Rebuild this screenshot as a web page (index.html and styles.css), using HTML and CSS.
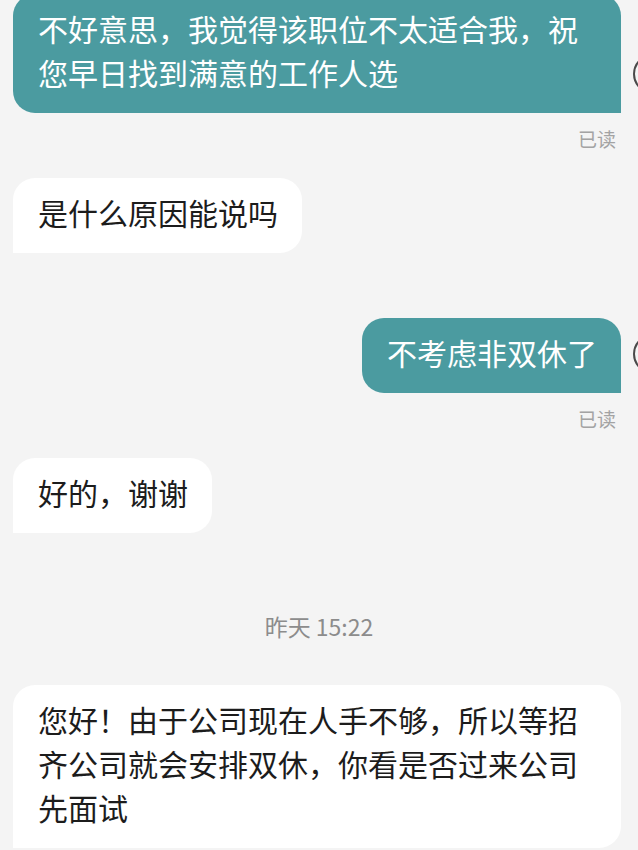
FILE: index.html
```html
<!DOCTYPE html>
<html lang="zh-CN">
<head>
<meta charset="utf-8">
<title>Chat</title>
<link rel="stylesheet" href="styles.css">
</head>
<body>
<div class="chat">
  <div class="row row-right row-first">
    <div class="bubble bubble-mine bubble-wide">不好意思，我觉得该职位不太适合我，祝您早日找到满意的工作人选</div>
    <span class="avatar"></span>
  </div>
  <div class="read">已读</div>

  <div class="row row-left gap-after-read">
    <div class="bubble bubble-theirs">是什么原因能说吗</div>
  </div>

  <div class="row row-right gap-big">
    <div class="bubble bubble-mine">不考虑非双休了</div>
    <span class="avatar"></span>
  </div>
  <div class="read">已读</div>

  <div class="row row-left gap-after-read">
    <div class="bubble bubble-theirs">好的，谢谢</div>
  </div>

  <div class="time">昨天 15:22</div>

  <div class="row row-left gap-after-time">
    <div class="bubble bubble-theirs bubble-wide">您好！由于公司现在人手不够，所以等招齐公司就会安排双休，你看是否过来公司先面试</div>
  </div>
</div>
</body>
</html>
```

FILE: styles.css
```css
html, body {
  margin: 0;
  padding: 0;
  background: #f4f4f4;
}

body {
  width: 638px;
  height: 850px;
  overflow: hidden;
  font-family: "Noto Sans CJK SC", "Noto Sans", sans-serif;
}

.chat {
  display: flex;
  flex-direction: column;
  padding: 0 17px 0 13px;
}

.row {
  position: relative;
  display: flex;
}

.row-right {
  justify-content: flex-end;
}

.row-left {
  justify-content: flex-start;
}

.row-first {
  margin-top: -6px;
}

.gap-after-read {
  margin-top: 29px;
}

.gap-big {
  margin-top: 65px;
}

.gap-after-time {
  margin-top: 46px;
}

.bubble {
  font-size: 30px;
  line-height: 44px;
  padding: 12px 24px 19px 25px;
  box-sizing: border-box;
  max-width: 608px;
}

.bubble-wide {
  width: 608px;
}

.bubble-mine {
  background: #4b9ba0;
  color: #ffffff;
  border-radius: 22px 22px 0 22px;
}

.bubble-theirs {
  background: #ffffff;
  color: #1c1c1c;
  border-radius: 22px 22px 22px 0;
}

.avatar {
  position: absolute;
  left: 620px;
  bottom: 19px;
  width: 5px;
  height: 40px;
  overflow: hidden;
}

.avatar::before {
  content: "";
  display: block;
  width: 40px;
  height: 40px;
  border-radius: 50%;
  border: 2px solid #4a4a4a;
  box-sizing: border-box;
}

.read {
  align-self: flex-end;
  margin-top: 16px;
  margin-right: 5px;
  font-size: 19px;
  line-height: 20px;
  color: #a3a3a3;
}

.time {
  align-self: center;
  margin-top: 80px;
  margin-left: 4px;
  font-size: 23px;
  line-height: 26px;
  color: #8c8c8c;
}
```
